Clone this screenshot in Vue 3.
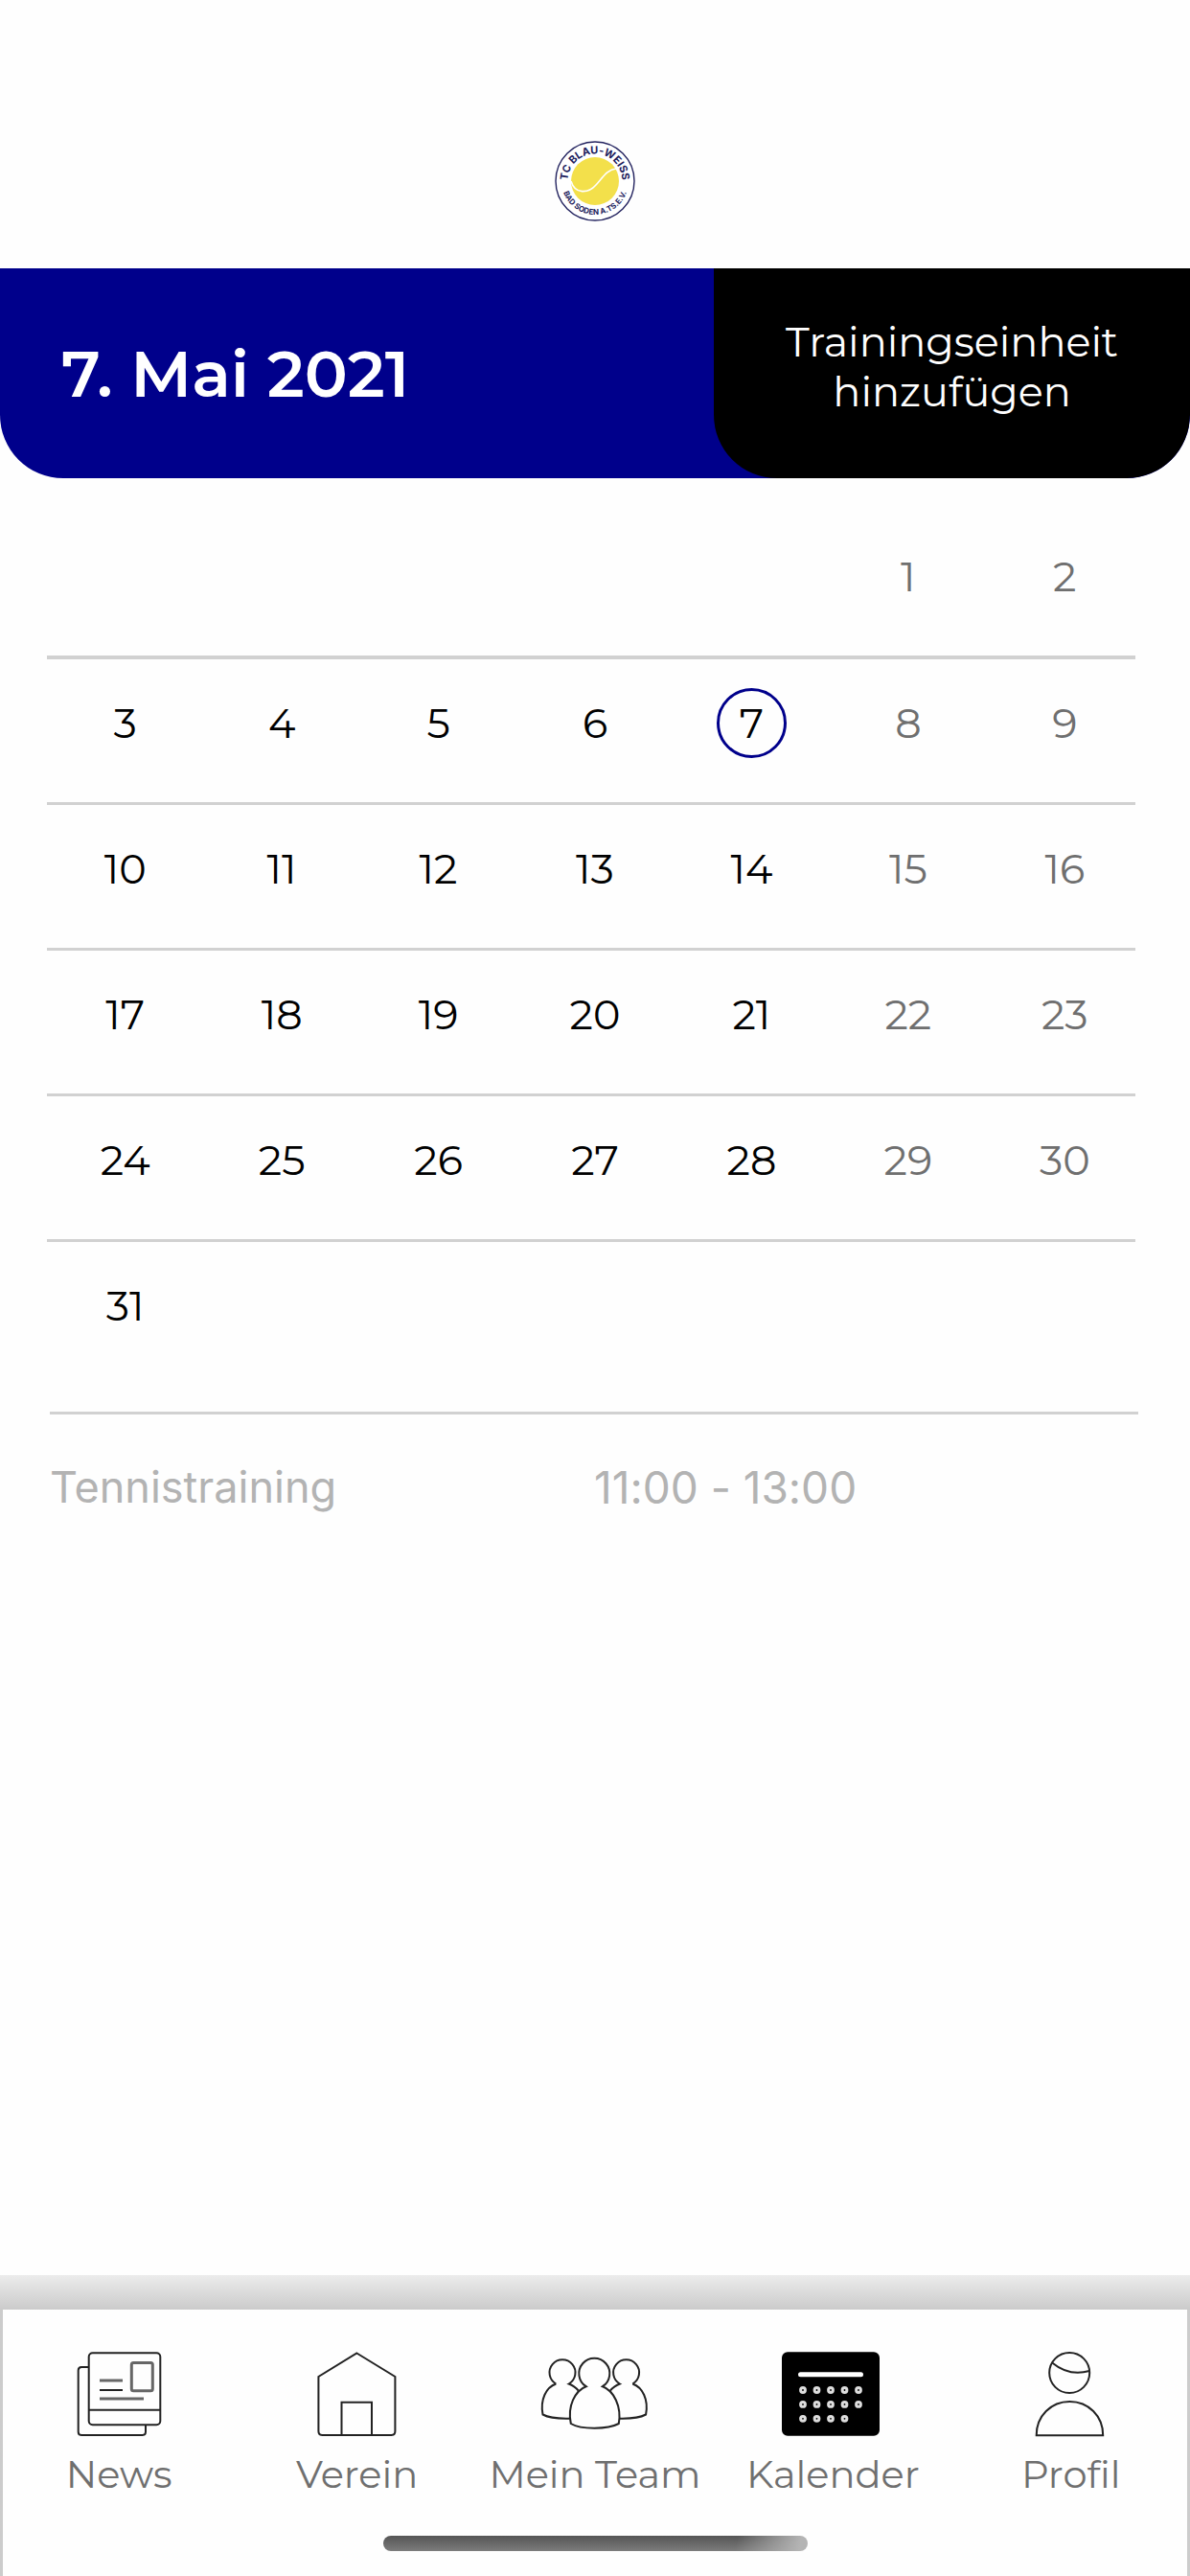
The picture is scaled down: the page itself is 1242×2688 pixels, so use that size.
<!-- App.vue -->
<template>
<div class="app">
    <!-- Vereinslogo -->
    <header class="logo-bar">
    <svg class="logo" viewBox="0 0 84 84" role="img" aria-label="TC Blau-Weiss Bad Soden">
        <defs>
        <path id="arc-top" d="M 13.5 42 A 28.5 28.5 0 0 1 70.5 42" />
        <path id="arc-bottom" d="M 7 42 A 35 35 0 0 0 77 42" />
        </defs>
        <circle cx="42" cy="42" r="41" fill="#fff" stroke="#23235f" stroke-width="1.4" />
        <circle cx="42" cy="42" r="25" fill="#f3e04b" />
        <path d="M17 42 C21 56 35 55 43 46 C51 37 55 30 64 29" fill="none" stroke="#fff" stroke-width="1.6" />
        <text class="logo-text logo-text-top"><textPath href="#arc-top" startOffset="50%" text-anchor="middle">TC BLAU-WEISS</textPath></text>
        <text class="logo-text logo-text-bottom"><textPath href="#arc-bottom" startOffset="50%" text-anchor="middle">BAD SODEN A.TS.E.V.</textPath></text>
    </svg>
    </header>

    <!-- Datum und Aktion -->
    <section class="date-bar">
    <h1 class="date-title">{{ renderTitle() }}</h1>
    <button type="button" class="add-button">Trainingseinheit hinzufügen</button>
    </section>

    <main class="content">
    <div class="calendar">
        <div v-for="(week, index) in weeks" :key="index" class="week">
        <div class="days">
            <template v-for="(day, i) in week" :key="i">
            <span v-if="day === null"></span>
            <button
                v-else
                type="button"
                class="day-button"
                :class="{ 'weekend': i > 4, 'current': day === selectedDay }"
                @click="selectedDay = day"
            >
                {{ day }}
            </button>
            </template>
        </div>
        </div>
    </div>

    <ul class="events">
        <li v-for="event in events" :key="event.title" class="event">
        <span>{{ event.title }}</span>
        <span class="event-time">{{ event.time }}</span>
        </li>
    </ul>
    </main>

    <footer class="footer">
    <div class="footer-shadow"></div>
    <div class="footer-body">
        <nav class="tabs">
        <a v-for="tab in tabs" :key="tab.name" href="#" class="tab" @click.prevent>
            <svg class="tab-icon" viewBox="0 0 120 92" aria-hidden="true">
            <g v-if="tab.icon === 'news'">
                <path d="M28.7 18 H21 Q17.7 18 17.7 21.5 V85.5 Q17.7 89 21 89 H84.5 Q88 89 88 85.5 V78" />
                <rect x="28.7" y="3.3" width="74.6" height="74.9" rx="4" />
                <path d="M28.7 62.7 H103.3" />
                <g class="soft">
                <rect x="73.3" y="13.5" width="22" height="29.2" rx="2" />
                <path d="M40 32 H64 M40 51 H86" />
                </g>
                <path d="M40 42 H64" />
            </g>
            <g v-else-if="tab.icon === 'house'">
                <path d="M59.4 3.5 L99.4 28 V85 Q99.4 89 95.4 89 H23.4 Q19.4 89 19.4 85 V28 Z" />
                <path d="M43.5 89 V54.7 H75 V89" />
            </g>
            <g v-else-if="tab.icon === 'team'">
                <path d="M19.3 35.5 A13.5 13.5 0 1 1 32.7 35.5 Q38.5 37.5 42.7 42.7" />
                <path d="M19.3 35.5 C9 39 2.5 52 5.5 67.5 Q14 72.2 33.5 71.7" />
                <path d="M99.3 35.5 A13.5 13.5 0 1 0 85.9 35.5 Q80.1 37.5 75.9 42.7" />
                <path d="M99.3 35.5 C109.6 39 116.1 52 113.1 67.5 Q104.6 72.2 85.1 71.7" />
                <path d="M50.7 38.2 A16 16 0 1 1 67.9 38.2 C79.5 42.5 88 59 84.8 77 Q76 81.7 59.3 81.7 Q42.6 81.7 34.8 77 C31 59 39.1 42.5 50.7 38.2 Z" />
            </g>
            <g v-else-if="tab.icon === 'calendar'">
                <rect class="solid" x="8" y="3.3" width="100" height="85.4" rx="5" />
                <path class="calendar-line" d="M26.5 25.7 H89.5" />
                <circle v-for="dot in 14" :key="dot" class="calendar-dot" :cx="29 + ((dot - 1) % 5) * 14.5" :cy="42 + Math.floor((dot - 1) / 5) * 14.9" r="2.4" />
            </g>
            <g v-else>
                <circle cx="58.2" cy="24" r="21" />
                <path d="M40.5 13.7 Q58 28 79 22" />
                <path d="M23.7 89.2 C23.7 69 39 54 58.4 54 C78 54 93.2 69 93.2 89.2 Z" />
            </g>
            </svg>
            <span class="tab-label">{{ tab.name }}</span>
        </a>
        </nav>
        <div class="home-indicator"></div>
    </div>
    </footer>
</div>
</template>

<script setup>
import { ref, computed } from 'vue'

const year = 2021
const month = 4 // Mai
const selectedDay = ref(7)

const months = ['Januar', 'Februar', 'März', 'April', 'Mai', 'Juni',
                'Juli', 'August', 'September', 'Oktober', 'November', 'Dezember']

const events = [
    { title: 'Tennistraining', time: '11:00 - 13:00' }
]

const tabs = [
    { name: 'News', icon: 'news' },
    { name: 'Verein', icon: 'house' },
    { name: 'Mein Team', icon: 'team' },
    { name: 'Kalender', icon: 'calendar' },
    { name: 'Profil', icon: 'profile' }
]

// Wochen beginnen am Montag, leere Zellen sind null
const weeks = computed(() => {
    const offset = (new Date(year, month, 1).getDay() + 6) % 7
    const daysInMonth = new Date(year, month + 1, 0).getDate()
    const cells = Array(offset).fill(null)
    for (let i = 1; i <= daysInMonth; i++) {
        cells.push(i)
    }
    while (cells.length % 7 !== 0) {
        cells.push(null)
    }
    const result = []
    for (let i = 0; i < cells.length; i += 7) {
        result.push(cells.slice(i, i + 7))
    }
    return result
})

const renderTitle = () => {
    return `${selectedDay.value}. ${months[month]} ${year}`
}
</script>

<style>
body {
margin: 0;
background-color: #fefefe;
}
</style>

<style scoped>
.app {
display: flex;
flex-direction: column;
min-height: 100vh;
font-family: "Montserrat", "Inter", sans-serif;
font-variant-ligatures: none;
color: #000;
}

button {
background: none;
border: none;
padding: 0;
font: inherit;
cursor: pointer;
}

.logo-bar {
display: flex;
justify-content: center;
padding: 147px 0 49px;
}

.logo {
width: 84px;
height: 84px;
}

.logo-text {
font-family: "Inter", sans-serif;
font-weight: 700;
fill: #1c1c5c;
}

.logo-text-top {
font-size: 11px;
}

.logo-text-bottom {
font-size: 8px;
}

.date-bar {
display: flex;
min-height: 219px;
background-color: #00008b;
border-radius: 0 0 66px 66px;
overflow: hidden;
}

.date-title {
display: flex;
align-items: center;
flex: 1;
margin: 0;
padding-left: 64px;
font-size: 67px;
font-weight: 600;
color: #fff;
}

.add-button {
width: 40%;
padding: 0 60px 14px;
background-color: #000;
border-radius: 0 0 66px 66px;
font-size: 43px;
line-height: 52px;
color: #fff;
}

.content {
flex: 1;
}

.calendar {
margin: 36px 57px 0 49px;
}

.week {
padding: 30px 0 46px;
border-bottom: 3px solid #d1d1d1;
}

.week:first-child {
border-bottom-width: 4px;
}

.week:last-child {
border-bottom: none;
}

/* Tage laufen rechts etwas über die Trennlinie hinaus */
.days {
display: grid;
grid-template-columns: repeat(7, 1fr);
justify-items: center;
margin-right: -8px;
}

.day-button {
width: 73px;
height: 73px;
border: 3px solid transparent;
border-radius: 50%;
font-size: 43px;
color: #000;
}

.day-button.weekend {
color: #6f6f6f;
}

.day-button.current {
border-color: #00008b;
}

.events {
margin: 28px 54px 0 52px;
padding: 0;
list-style: none;
border-top: 3px solid #d1d1d1;
}

.event {
display: grid;
grid-template-columns: 1fr 1fr;
padding-top: 48px;
font-family: "Inter", sans-serif;
font-size: 45px;
line-height: 56px;
color: #b3b3b3;
}

.event-time {
font-size: 46px;
}

.footer-shadow {
height: 36px;
background: linear-gradient(#ececec, #cbcbcb);
}

.footer-body {
padding: 42px 0 26px;
background-color: #fefefe;
box-shadow: inset 3px 0 #ccc, inset -3px 0 #ccc;
}

.tabs {
display: grid;
grid-template-columns: repeat(5, 1fr);
}

.tab {
display: flex;
flex-direction: column;
align-items: center;
gap: 14px;
text-decoration: none;
color: #6f6f6f;
}

.tab-icon {
width: 120px;
height: 92px;
fill: none;
stroke: #222;
stroke-width: 2;
}

.tab-icon .soft {
stroke: #666;
stroke-width: 3;
}

.tab-icon .solid {
fill: #000;
stroke: #000;
}

.calendar-line {
stroke: #fff;
stroke-width: 5;
stroke-linecap: round;
}

.calendar-dot {
stroke: #ddd;
stroke-width: 3;
}

.tab-label {
font-size: 40px;
line-height: 48px;
white-space: nowrap;
}

.home-indicator {
width: 443px;
height: 16px;
margin: 40px auto 0;
border-radius: 8px;
background: linear-gradient(100deg, transparent 83%, #b4b4b4 98%), linear-gradient(#555, #7c7c7c);
}
</style>
